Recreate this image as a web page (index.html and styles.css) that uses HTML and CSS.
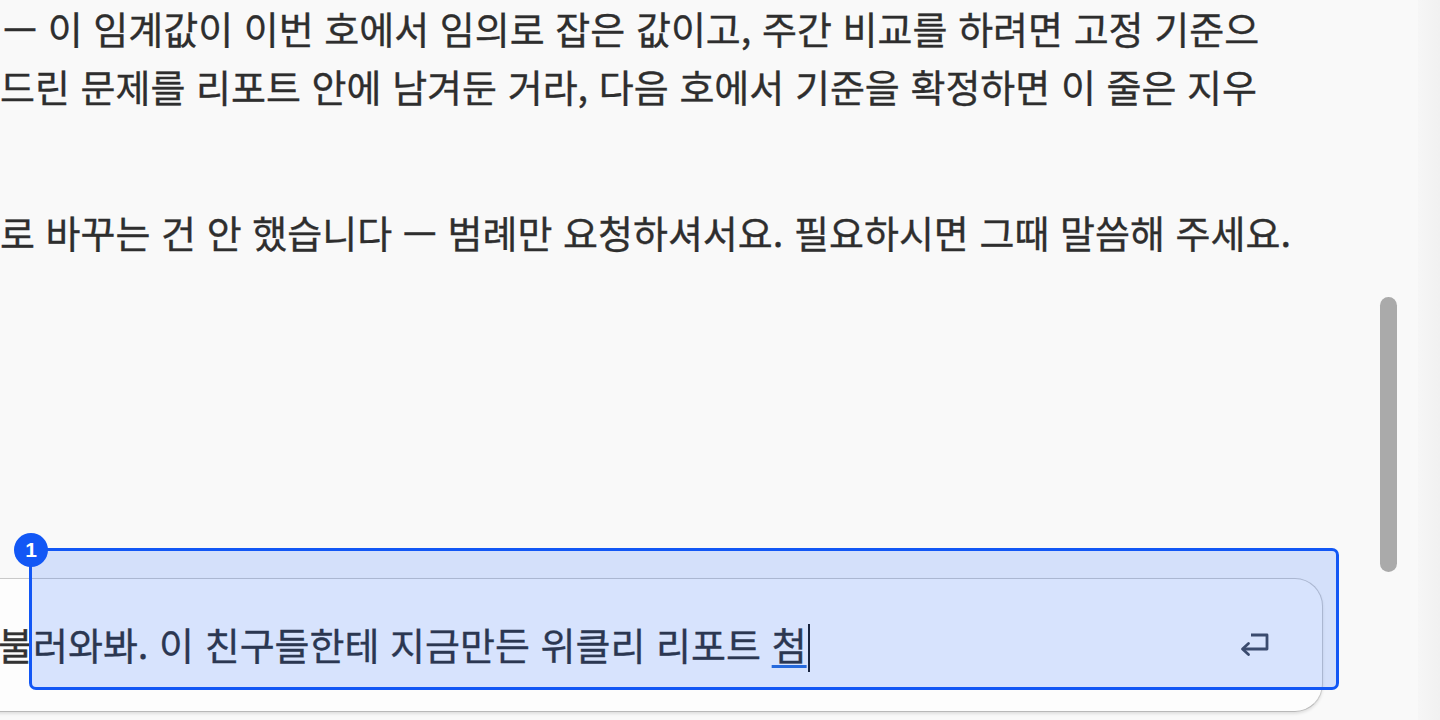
FILE: index.html
```html
<!DOCTYPE html>
<html lang="ko">
<head>
<meta charset="utf-8">
<title>Chat</title>
<link rel="stylesheet" href="styles.css">
</head>
<body>
<div class="app">
  <main class="main">
    <div class="thread">
      <p class="lead">— 이 임계값이 이번 호에서 임의로 잡은 값이고, 주간 비교를 하려면 고정 기준으<br>드린 문제를 리포트 안에 남겨둔 거라, 다음 호에서 기준을 확정하면 이 줄은 지우</p>
      <p>로 바꾸는 건 안 했습니다 — 범례만 요청하셔서요. 필요하시면 그때 말씀해 주세요.</p>
    </div>
    <div class="composer">
      <div class="input">불러와봐. 이 친구들한테 지금만든 위클리 리포트 <span class="ime">첨</span><span class="caret"></span></div>
      <svg class="enter" viewBox="0 0 32 28" width="32" height="28" aria-hidden="true">
        <path d="M13 4 H29 V18 H5" fill="none" stroke="#454a55" stroke-width="2.8" stroke-linejoin="round"/>
        <path d="M10.5 12.5 L4.5 18 L10.5 23.5" fill="none" stroke="#454a55" stroke-width="2.8" stroke-linejoin="round" stroke-linecap="round"/>
      </svg>
    </div>
    <div class="highlight"></div>
    <div class="badge">1</div>
  </main>
  <div class="track"><div class="thumb"></div></div>
  <div class="edge"></div>
</div>
</body>
</html>
```
FILE: styles.css
```css
html, body {
  margin: 0;
  padding: 0;
}
body {
  background: #f9f9f9;
  height: 720px;
  overflow: hidden;
  font-family: "Noto Sans CJK KR", "Noto Sans", sans-serif;
  color: #333;
}
.app {
  display: flex;
  height: 720px;
}
.main {
  position: relative;
  flex: none;
  width: 1372px;
  display: flex;
  flex-direction: column;
}
.thread {
  margin-top: -1px;
  font-size: 38px;
  line-height: 58px;
  white-space: nowrap;
  color: #2e2e2e;
  -webkit-text-stroke: 0.35px #2e2e2e;
}
.thread p {
  margin: 0;
}
.thread p + p {
  margin-top: 88px;
}
.thread .lead {
  text-indent: 3px;
}
.composer {
  margin-top: auto;
  margin-bottom: 8px;
  margin-left: -40px;
  width: 1363px;
  height: 134px;
  box-sizing: border-box;
  border: 1.5px solid #c9c9c9;
  border-bottom-color: #b9b9b9;
  border-radius: 28px;
  background: #fdfdfd;
  box-shadow: 0 2px 3px rgba(0, 0, 0, 0.10);
  display: flex;
  align-items: center;
  padding: 0 52px 0 37px;
}
.input {
  flex: 1;
  font-size: 38px;
  line-height: 50px;
  white-space: nowrap;
  color: #333;
  -webkit-text-stroke: 0.35px #333;
}
.ime {
  text-decoration: underline;
  text-decoration-color: #2d6fd8;
  text-decoration-thickness: 3px;
  text-underline-offset: 5px;
}
.caret {
  display: inline-block;
  width: 2px;
  height: 48px;
  background: #1e1e1e;
  margin-left: 1px;
  vertical-align: -12px;
}
.enter {
  flex: none;
  margin-top: 0;
}
.highlight {
  position: absolute;
  left: 29px;
  top: 548px;
  width: 1310px;
  height: 142px;
  box-sizing: border-box;
  border: 3px solid #1257f5;
  border-radius: 7px;
  background: rgba(0, 80, 255, 0.15);
}
.badge {
  position: absolute;
  left: 14px;
  top: 533px;
  width: 34px;
  height: 34px;
  border-radius: 50%;
  background: #1257f5;
  color: #fff;
  font-family: "Liberation Sans", Arial, sans-serif;
  font-weight: bold;
  font-size: 21px;
  line-height: 34px;
  text-align: center;
}
.track {
  flex: none;
  width: 46px;
  padding-left: 8px;
  box-sizing: border-box;
}
.thumb {
  margin-top: 297px;
  width: 17px;
  height: 275px;
  border-radius: 9px;
  background: #aaaaaa;
}
.edge {
  flex: 1;
  background: linear-gradient(to right, #f6f6f6, #f1f1f1);
}
```
